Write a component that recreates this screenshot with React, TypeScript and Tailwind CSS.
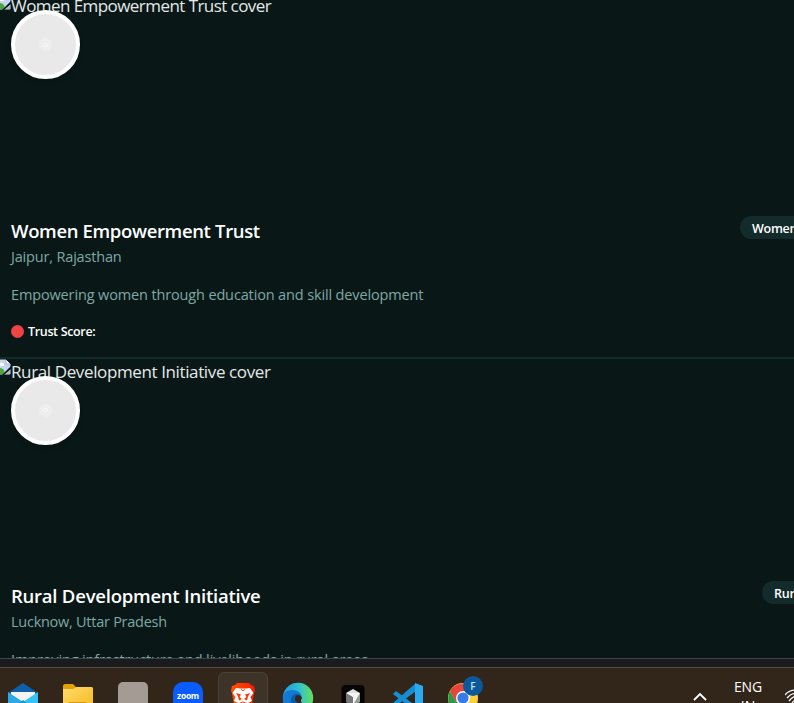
import type { ReactNode } from "react";

type Org = {
  name: string;
  place: string;
  about: string;
  tag: string;
  altStyle: string;
  nameStyle: string;
  placeStyle: string;
  aboutStyle: string;
  tagStyle: string;
};

const orgs: Org[] = [
  {
    name: "Women Empowerment Trust",
    place: "Jaipur, Rajasthan",
    about: "Empowering women through education and skill development",
    tag: "Women Empowerment",
    altStyle: "tracking-[-0.56px]",
    nameStyle: "tracking-[-0.35px]",
    placeStyle: "tracking-[-0.17px]",
    aboutStyle: "tracking-[-0.14px]",
    tagStyle: "ml-[740px]",
  },
  {
    name: "Rural Development Initiative",
    place: "Lucknow, Uttar Pradesh",
    about: "Improving infrastructure and livelihoods in rural areas",
    tag: "Rural Development",
    altStyle: "tracking-[-0.38px]",
    nameStyle: "tracking-[-0.23px]",
    placeStyle: "tracking-[-0.26px]",
    aboutStyle: "tracking-[-0.14px]",
    tagStyle: "ml-[762px]",
  },
];

function BrokenImage() {
  return (
    <svg width="16" height="16" viewBox="0 0 16 16" className="-ml-[5px] shrink-0">
      <path d="M1 1h10l4 4v10H1z" fill="#c4d6f5" stroke="#d5d8dc" />
      <path d="M11 1v4h4" fill="#fff" stroke="#a9adb2" />
      <path d="M3 6q1-3 3-2 3-1 3 3H3z" fill="#fff" />
      <path d="M1 14v-3q4-4 8 0l1 4H1z" fill="#4ca63b" />
      <path d="M7 16 16 7v3l-7 6z" fill="#091817" />
      <path d="m11 15 4-4v4z" fill="#b5bab9" />
    </svg>
  );
}

function Card({ org }: { org: Org }) {
  return (
    <article className="relative h-[365.5px] shrink-0 border-b-2 border-[#142a29]">
      <div className="flex h-[222px] items-start">
        <BrokenImage />
        <span className={"-mt-[0.2px] whitespace-nowrap text-[17px] leading-[26px] text-[#e4e9e8] " + org.altStyle}>
          {org.name} cover
        </span>
      </div>
      <div className="absolute left-[11px] top-[16.75px] flex size-[69px] items-center justify-center rounded-full border-4 border-white bg-[#e9e9e9] shadow-md">
        <div className="flex size-[13px] items-center justify-center rounded-full bg-[#eeeeee]">
          <div className="h-1 w-[5px] rounded-full border border-[#f8f8f8]" />
        </div>
      </div>
      <div className="relative flex h-[29px] items-start">
        <h3 className={"pl-[11px] pt-[3px] whitespace-nowrap text-[18.5px] font-semibold leading-6 text-white " + org.nameStyle}>
          {org.name}
        </h3>
        <span className={"absolute top-0 h-[23px] whitespace-nowrap rounded-full bg-[#132b2a] px-3 text-[12.5px] font-semibold leading-[25px] tracking-[-0.25px] text-white " + org.tagStyle}>
          {org.tag}
        </span>
      </div>
      <p className={"pl-[11px] whitespace-nowrap text-[14.5px] leading-6 text-[#7fa8a5] " + org.placeStyle}>{org.place}</p>
      <p className={"mt-[14px] pl-[11px] whitespace-nowrap text-[14.5px] leading-6 text-[#7fa8a5] " + org.aboutStyle}>{org.about}</p>
      <div className="mt-[13px] flex h-6 items-center gap-[4px] pl-[11px]">
        <span className="size-[13px] rounded-full bg-[#ef4444]" />
        <span className="pt-[2px] text-[12.5px] font-semibold tracking-[-0.34px] text-white">Trust Score:</span>
      </div>
    </article>
  );
}

function Slot({ children, active }: { children: ReactNode; active?: boolean }) {
  return (
    <div className={"flex h-[50px] w-[50px] shrink-0 justify-center rounded-md pt-[9px] " + (active ? "border border-[#4b4036] bg-[#3e3329]" : "border border-transparent")}>
      {children}
    </div>
  );
}

function Mail() {
  return (
    <svg width="32" height="32" viewBox="0 0 32 32">
      <path d="M1 11 16 1l15 10v6H1z" fill="#0c5fa8" />
      <path d="M4 10h24v10H4z" fill="#f3f3f3" />
      <path d="m1 10 15 10-8 10H1z" fill="#2ba9e7" />
      <path d="m31 10-15 10 8 10h7z" fill="#35c3f3" />
      <path d="m1 30 15-12 15 12z" fill="#1799dc" />
    </svg>
  );
}

function Folder() {
  return (
    <svg width="32" height="32" viewBox="0 0 32 32">
      <defs>
        <linearGradient id="folder" x1="0" y1="0" x2="1" y2="1">
          <stop stopColor="#ffdc6d" />
          <stop offset="1" stopColor="#f6b91d" />
        </linearGradient>
      </defs>
      <path d="M1 4q0-2 2-2h8l3 3h15q2 0 2 2v10H1z" fill="#e3a008" />
      <path d="M1 7h10l4-2h14q2 0 2 2v20H1z" fill="url(#folder)" />
      <path d="M6 22q0-2 2-2h15q2 0 2 2v5H6z" fill="#d59b12" />
    </svg>
  );
}

function Brave() {
  return (
    <svg width="32" height="32" viewBox="0 0 32 32">
      <defs>
        <linearGradient id="brave">
          <stop stopColor="#ff5500" />
          <stop offset="1" stopColor="#ff1700" />
        </linearGradient>
      </defs>
      <path d="m10 1-2 2-3 1-1 5 1 2 2 12q1 3 4 5l5 3 5-3q3-2 4-5l2-12 1-2-1-5-3-1-2-2z" fill="url(#brave)" />
      <path d="m9 6 4 .6h6l4-.6 3.5 5-3 4 1.5 4-4 2-5 4-5-4-4-2 1.5-4-3-4z" fill="#fff" />
      <path d="m9 11 5 1.5-1.5 2.5 2.5 2-3 1.5-1-4zm14 0-5 1.5 1.5 2.5-2.5 2 3 1.5 1-4z" fill="#ff3500" />
      <path d="m14 7.5 2 1 2-1M12 21.5l4-1.5 4 1.5" fill="none" stroke="#ff3500" />
    </svg>
  );
}

function Edge() {
  return (
    <svg width="32" height="32" viewBox="0 0 32 32">
      <defs>
        <linearGradient id="edge">
          <stop stopColor="#2097df" />
          <stop offset=".55" stopColor="#32c2cf" />
          <stop offset="1" stopColor="#66df57" />
        </linearGradient>
      </defs>
      <circle cx="16" cy="16" r="15.2" fill="url(#edge)" />
      <path d="M1 17q0-8 8-9 9-1 11 7-6-4-9 2-2 8 5 14Q2 30 1 17z" fill="#117bd3" />
      <path d="M9 20q-1-6 4-8 7 0 6 4-3 3 0 6 4 2 10-1-4 10-13 10-6-4-7-11z" fill="#095ca8" />
      <path d="M15 13q4 0 5 3-2 3 0 5-6 1-7-4 0-3 2-4z" fill="#35271b" />
    </svg>
  );
}

function Cursor() {
  return (
    <svg width="32" height="32" viewBox="0 0 32 32">
      <rect x="4.5" y="3" width="23" height="26" rx="4" fill="#050505" />
      <path d="m16 7 7 4-7 4-7-4z" fill="#dedede" />
      <path d="m9 11 7 4v10l-7-5z" fill="#777" />
      <path d="m23 11-7 4v10l7-5z" fill="#9b9b9b" />
      <path d="M9 11h14l-7 12v-8z" fill="#f5f5f5" />
    </svg>
  );
}

function Code() {
  return (
    <svg width="32" height="32" viewBox="0 0 32 32">
      <path d="m1 12 3-3 20 15v6z" fill="#168ed5" />
      <path d="m1 21 3 3L24 9V1z" fill="#168ed5" />
      <path d="m23 1 8 3v25l-8 3z" fill="#29aaf1" />
    </svg>
  );
}

function Chrome() {
  return (
    <svg width="32" height="32" viewBox="0 0 32 32">
      <circle cx="16" cy="16" r="15" fill="#ffce38" />
      <path d="M3 9A15 15 0 0 1 29 9H16l-7 11z" fill="#e8443a" />
      <path d="M3 9a15 15 0 0 0 12 22l6-11H9z" fill="#279c4d" />
      <circle cx="16" cy="16" r="7" fill="#fff" />
      <circle cx="16" cy="16" r="5.6" fill="#367ce7" />
    </svg>
  );
}

export default function App() {
  return (
    <div className="flex h-[703px] w-full flex-col overflow-hidden bg-[#091817] font-['Open_Sans','Noto_Sans',sans-serif]">
      <main className="h-[658px] shrink-0 overflow-hidden">
        <div className="-mt-[6.5px] flex flex-col">
          {orgs.map((org) => (
            <Card key={org.name} org={org} />
          ))}
        </div>
      </main>
      <div className="h-[9px] shrink-0 border-t border-[#414449] bg-[#1a1b1d]" />
      <footer className="flex h-9 items-start overflow-hidden border-t border-[#554a41] bg-[#322519] pt-1">
        <div className="-ml-[2px] flex gap-[5px]">
          <Slot><Mail /></Slot>
          <Slot><Folder /></Slot>
          <Slot><div className="size-[30px] rounded-[5px] bg-[#a39b94]" /></Slot>
          <Slot>
            <div className="size-[30px] rounded-[10px] bg-[#0b5cff] text-center text-[8.5px] font-bold leading-[27px] tracking-[-0.3px] text-white">zoom</div>
          </Slot>
          <Slot active><Brave /></Slot>
          <Slot><Edge /></Slot>
          <Slot><Cursor /></Slot>
          <Slot><Code /></Slot>
          <Slot>
            <div className="relative">
              <Chrome />
              <span className="absolute -top-[6px] left-[16px] size-5 rounded-full bg-[#09599c] text-center text-[10px] font-semibold leading-5 text-[#c7e2fa]">F</span>
            </div>
          </Slot>
        </div>
        <div className="ml-auto flex shrink-0 items-start text-white">
          <svg width="16" height="32" viewBox="0 0 16 32" fill="none" stroke="currentColor" strokeWidth="1.9" className="mr-[24px]">
            <path d="m2 28 6-6 6 6" />
          </svg>
          <div className="w-[32px] pt-[5px] text-center text-[14px] leading-[20px] tracking-[-0.1px]">
            <div>ENG</div>
            <div className="-mt-px">IN</div>
          </div>
          <svg width="9" height="32" viewBox="0 0 9 32" fill="none" stroke="currentColor" strokeWidth="1.3" className="ml-[21px]">
            <path d="M0 23q4-5 12-5M2 26q4-5 10-5M4 29q4-5 8-5M7 31q2-3 5-3" />
          </svg>
        </div>
      </footer>
    </div>
  );
}
